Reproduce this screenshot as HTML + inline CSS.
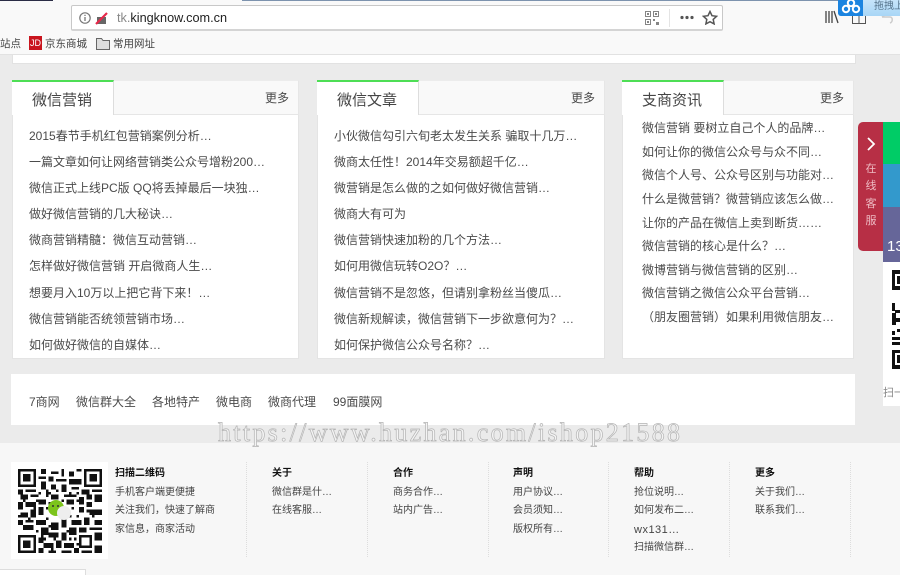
<!DOCTYPE html>
<html lang="zh"><head><meta charset="utf-8"><title>tk.kingknow.com.cn</title>
<style>
*{box-sizing:border-box}
html,body{margin:0;padding:0}
body{width:900px;height:575px;overflow:hidden;position:relative;background:#ebebeb;font:12px/16px "Liberation Sans","WenQuanYi Zen Hei","Noto Sans CJK SC",sans-serif;color:#4a4a4a}
.a,.t,.i,.f{position:absolute;white-space:nowrap}
.a{display:block}
.card{position:absolute;top:80px;height:279px;background:#fff;border:1px solid #e4e4e4;border-top:0}
.hd{position:absolute;left:-1px;right:-1px;top:0;height:35px;background:#f9f9f9;border:1px solid #e6e6e6;border-top:1px solid #ececec}
.tab{position:absolute;left:-1px;top:0;width:102px;height:35px;background:#fff;border-top:2px solid #4ede55;border-right:1px solid #ddd;font-size:15px;line-height:37px;padding-left:20px;color:#444}
.more{position:absolute;top:10px;right:9px;color:#4a4a4a;font-size:12px}
.i{color:#4a4a4a;line-height:16px}
.f{font-size:10px;line-height:14px;color:#444;margin-top:2px}
.f b{color:#111}
.sep{position:absolute;top:462px;height:95px;width:0;border-left:1px dotted #ddd}
.bm{font-size:10.5px;color:#444;line-height:14px;top:37px}
</style></head><body>

<div class="a" style="left:0;top:0;width:900px;height:55px;background:#f9f9f9;border-bottom:1px solid #e2e2e2"></div>
<div class="a" style="left:0;top:0;width:53px;height:1px;background:#2a2c45"></div>
<div class="a" style="left:242px;top:0;width:658px;height:1px;background:#7d93ae"></div>

<div class="a" style="left:71px;top:5px;width:652px;height:26px;background:#fff;border:1px solid #c8c8c8;border-bottom:2px solid #d4d4d4;border-radius:2px"></div>
<svg class="a" style="left:78px;top:11px" width="30" height="14" viewBox="0 0 30 14"><circle cx="7" cy="7" r="5.2" fill="none" stroke="#777" stroke-width="1.2"/><path d="M7 6v4M7 3.8v1.2" stroke="#777" stroke-width="1.3"/><path d="M19 6h9v7h-9z" fill="#666"/><path d="M18 13L29 2" stroke="#e8284a" stroke-width="2.2"/></svg>
<span class="t" style="left:117px;top:10px;font-size:12.700px;color:#222"><span style="color:#888">tk.</span>kingknow.com.cn</span>

<svg class="a" style="left:645px;top:11px" width="14" height="14" viewBox="0 0 14 14" fill="none" stroke="#858585"><path d="M.5.5h5v5h-5zM8.500.5h5v5h-5zM.5 8.500h5v5h-5z"/><path d="M8 8h2v2H8zM11 11h3v3h-3zM2 2h2v2H2zM10 2h2v2h-2zM2 10h2v2H2z" fill="#858585" stroke="none"/></svg>
<div class="a" style="left:669px;top:9px;width:1px;height:18px;background:#e4e4e4"></div>
<svg class="a" style="left:680px;top:15px" width="14" height="5"><circle cx="2" cy="2.500" r="1.600" fill="#555"/><circle cx="7" cy="2.500" r="1.600" fill="#555"/><circle cx="12" cy="2.500" r="1.600" fill="#555"/></svg>
<svg class="a" style="left:702px;top:10px" width="16" height="15" viewBox="0 0 16 15"><path d="M8 1.500l2 4.200 4.600.6-3.400 3.100.9 4.500L8 11.700l-4.100 2.200.9-4.500L1.400 6.300 6 5.700z" fill="none" stroke="#555" stroke-width="1.500"/></svg>

<svg class="a" style="left:825px;top:10px" width="14" height="14" viewBox="0 0 14 14"><path d="M1 1v12M4 1v12M7 1v12M9 1l4 12" stroke="#444" stroke-width="1.300" fill="none"/></svg>
<svg class="a" style="left:852px;top:14px" width="14" height="10" viewBox="0 0 14 10"><path d="M.5 0v9.500h13V0M7 0v9.500" stroke="#555" fill="none"/></svg>
<svg class="a" style="left:880px;top:14px" width="14" height="10" viewBox="0 0 14 10"><path d="M2 3h8c3 0 3 5 0 6M2 3l4-3" stroke="#ccc" stroke-width="1.500" fill="none"/></svg>
<div class="a" style="left:838px;top:0;width:62px;height:16px;background:linear-gradient(#c6e4fa,#a8d6f6);border-radius:0 0 0 3px"></div>
<div class="a" style="left:838px;top:0;width:25px;height:16px;background:#1b84e0;border-radius:0 0 0 3px"></div>
<svg class="a" style="left:841px;top:0" width="20" height="14" viewBox="0 0 20 14"><circle cx="10" cy="3" r="3.200" fill="none" stroke="#fff" stroke-width="2"/><circle cx="5" cy="9" r="3.200" fill="none" stroke="#fff" stroke-width="2"/><circle cx="15" cy="9" r="3.200" fill="none" stroke="#fff" stroke-width="2"/></svg>
<span class="t" style="left:874px;top:0;font-size:10px;line-height:14px;color:#56748c">拖拽上</span>

<span class="t bm" style="left:0">站点</span>
<div class="a" style="left:29px;top:36px;width:13px;height:14px;background:#c9151e;color:#fff;font-size:9px;line-height:14px;text-align:center">JD</div>
<span class="t bm" style="left:45px">京东商城</span>
<svg class="a" style="left:96px;top:37px" width="14" height="13" viewBox="0 0 14 13"><path d="M.5 12.500V1.500h5l1.500 2h6.500v9z" fill="#ddd" stroke="#666"/></svg>
<span class="t bm" style="left:113px">常用网址</span>

<div class="a" style="left:12px;top:55px;width:844px;height:9px;background:#fff;border:1px solid #e2e2e2;border-top:0"></div>

<div class="card" style="left:12px;width:287px">
 <div class="hd"></div><div class="tab">微信营销</div><span class="t more">更多</span>
</div>
<div class="i" style="left:29px;top:128px">2015春节手机红包营销案例分析…</div>
<div class="i" style="left:29px;top:154px">一篇文章如何让网络营销类公众号增粉200…</div>
<div class="i" style="left:29px;top:180px">微信正式上线PC版 QQ将丢掉最后一块独…</div>
<div class="i" style="left:29px;top:206px">做好微信营销的几大秘诀…</div>
<div class="i" style="left:29px;top:232px">微商营销精髓：微信互动营销…</div>
<div class="i" style="left:29px;top:258px">怎样做好微信营销 开启微商人生…</div>
<div class="i" style="left:29px;top:285px">想要月入10万以上把它背下来！…</div>
<div class="i" style="left:29px;top:311px">微信营销能否统领营销市场…</div>
<div class="i" style="left:29px;top:337px">如何做好微信的自媒体…</div>

<div class="card" style="left:317px;width:288px">
 <div class="hd"></div><div class="tab">微信文章</div><span class="t more">更多</span>
</div>
<div class="i" style="left:334px;top:128px">小伙微信勾引六旬老太发生关系 骗取十几万…</div>
<div class="i" style="left:334px;top:154px">微商太任性！2014年交易额超千亿…</div>
<div class="i" style="left:334px;top:180px">微营销是怎么做的之如何做好微信营销…</div>
<div class="i" style="left:334px;top:206px">微商大有可为</div>
<div class="i" style="left:334px;top:232px">微信营销快速加粉的几个方法…</div>
<div class="i" style="left:334px;top:258px">如何用微信玩转O2O？…</div>
<div class="i" style="left:334px;top:285px">微信营销不是忽悠，但请别拿粉丝当傻瓜…</div>
<div class="i" style="left:334px;top:311px">微信新规解读，微信营销下一步欲意何为？…</div>
<div class="i" style="left:334px;top:337px">如何保护微信公众号名称？…</div>

<div class="card" style="left:622px;width:232px">
 <div class="hd"></div><div class="tab">支商资讯</div><span class="t more">更多</span>
</div>
<div class="i" style="left:642px;top:120px">微信营销 要树立自己个人的品牌…</div>
<div class="i" style="left:642px;top:144px">如何让你的微信公众号与众不同…</div>
<div class="i" style="left:642px;top:167px">微信个人号、公众号区别与功能对…</div>
<div class="i" style="left:642px;top:191px">什么是微营销？微营销应该怎么做…</div>
<div class="i" style="left:642px;top:215px">让你的产品在微信上卖到断货……</div>
<div class="i" style="left:642px;top:238px">微信营销的核心是什么？…</div>
<div class="i" style="left:642px;top:262px">微博营销与微信营销的区别…</div>
<div class="i" style="left:642px;top:285px">微信营销之微信公众平台营销…</div>
<div class="i" style="left:642px;top:309px">（朋友圈营销）如果利用微信朋友…</div>

<div class="a" style="left:858px;top:122px;width:26px;height:129px;background:#b72f45;border-radius:5px 0 0 5px"></div>
<svg class="a" style="left:866px;top:137px" width="10" height="14" viewBox="0 0 10 14"><path d="M2 1l6 6-6 6" fill="none" stroke="#fff" stroke-width="1.800"/></svg>
<div class="a" style="left:864px;top:161px;width:14px;font-size:11px;line-height:17.300px;color:#eebcc4;text-align:center">在<br>线<br>客<br>服</div>
<div class="a" style="left:883px;top:122px;width:17px;height:42px;background:#00cc66"></div>
<div class="a" style="left:883px;top:164px;width:17px;height:43px;background:#3399cc"></div>
<div class="a" style="left:883px;top:207px;width:17px;height:55px;background:#666699"></div>
<span class="t" style="left:887px;top:238px;font-size:15px;line-height:18px;color:#fff;width:13px;overflow:hidden">13</span>
<div class="a" style="left:883px;top:262px;width:17px;height:144px;background:#fff"></div>
<svg class="a" style="left:883px;top:262px" width="17" height="114" viewBox="0 0 17 114"><path d="M9 8h8v4H12v12h5v4H9zM9 41h3v8H9zM12 48h5v3h-5zM9 51h4v12H9zM13 56h4v4h-4zM9 69h3v4H9zM14 67h3v3h-3zM9 75h8v3H9zM9 80h8v3H9zM9 88h8v3h-5v12h5v4H9z" fill="#111"/><path d="M14 14h3v8h-3zM14 93h3v8h-3z" fill="#111"/></svg>
<span class="t" style="left:883px;top:385px;width:17px;overflow:hidden;font-size:11px;color:#888">扫一扫</span>

<div class="a" style="left:11px;top:374px;width:844px;height:51px;background:#fff"></div>
<span class="t" style="left:29px;top:394px">7商网</span>
<span class="t" style="left:76px;top:394px">微信群大全</span>
<span class="t" style="left:152px;top:394px">各地特产</span>
<span class="t" style="left:216px;top:394px">微电商</span>
<span class="t" style="left:268px;top:394px">微商代理</span>
<span class="t" style="left:333px;top:394px">99面膜网</span>

<div class="a" style="left:0;top:443px;width:900px;height:132px;background:#f7f7f7"></div>
<div class="a" style="left:0;top:569px;width:86px;height:6px;background:#fff;border:1px solid #ddd;border-left:0;border-bottom:0"></div>

<div class="a" style="left:11px;top:462px;width:97px;height:97px;background:#fff"></div>
<svg class="a" style="left:18px;top:469px" width="84" height="84" viewBox="0 0 33 33" shape-rendering="crispEdges"><path fill="#111" d="M0 0h7v7H0zM1 1v5h5V1zM2 2h3v3H2zM26 0h7v7h-7zM27 1v5h5V1zM28 2h3v3h-3zM0 26h7v7H0zM1 27v5h5v-5zM2 28h3v3H2z" fill-rule="evenodd"/><path fill="#111" d="M9 0h2v2H9zM13 1h3v1h-3zM17 0h1v3h-1zM20 1h2v2h-2zM23 0h2v1h-2zM8 3h3v1H8zM12 3h2v2h-2zM15 4h4v1h-4zM20 4h5v2h-5zM9 5h2v3H9zM13 6h2v2h-2zM17 6h2v3h-2zM21 7h3v1h-3zM0 8h2v2H0zM3 8h4v1H3zM11 8h1v3h-1zM25 8h3v2h-3zM29 8h4v1h-4zM1 10h3v2H1zM5 10h3v1H5zM13 10h3v2h-3zM18 10h5v1h-5zM24 11h2v3h-2zM27 10h2v2h-2zM30 10h3v3h-3zM0 13h2v3H0zM3 13h4v2H3zM8 12h3v2H8zM19 12h3v2h-3zM27 13h2v2h-2zM1 17h3v2H1zM5 16h2v3H5zM8 15h2v3H8zM24 15h2v2h-2zM28 16h5v2h-5zM0 20h2v2H0zM3 20h3v1H3zM7 20h4v2H7zM13 21h3v3h-3zM17 19h2v4h-2zM21 20h4v2h-4zM26 19h2v3h-2zM30 20h3v2h-3zM2 22h4v2H2zM9 23h3v3H9zM20 23h3v3h-3zM24 23h3v2h-3zM28 23h5v1h-5zM8 27h2v2H8zM12 25h4v2h-4zM17 25h2v3h-2zM24 26h5v5h-5zM30 25h3v3h-3zM10 29h4v2h-4zM15 28h2v3h-2zM18 29h4v2h-4zM8 31h2v2H8zM12 32h3v1h-3zM17 32h4v1h-4zM22 31h2v2h-2zM25 32h4v1h-4zM30 30h3v3h-3z"/><path fill="#111" d="M8 9h1v1H8zM12 9h1v1h-1zM15 8h1v1h-1zM20 9h1v1h-1zM23 9h1v1h-1zM2 12h1v1H2zM7 12h1v1H7zM12 13h1v1h-1zM17 12h1v1h-1zM23 12h1v1h-1zM6 15h1v1H6zM11 15h1v1h-1zM21 15h1v1h-1zM27 16h1v1h-1zM0 18h1v1H0zM4 19h1v1H4zM11 19h1v1h-1zM20 18h1v1h-1zM23 18h1v1h-1zM29 18h1v1h-1zM12 22h1v1h-1zM19 24h1v1h-1zM7 24h1v1H7zM10 27h1v1h-1zM14 27h1v1h-1zM20 27h1v1h-1zM22 27h1v1h-1zM9 26h1v1H9zM13 31h1v1h-1zM23 29h1v1h-1z"/><path fill="#fff" d="M25 27h3v3h-3z"/></svg>
<svg class="a" style="left:47px;top:500px" width="26" height="22" viewBox="0 0 26 22"><circle cx="9" cy="8" r="8" fill="#7cc41c"/><circle cx="17" cy="13" r="7" fill="#eee"/><circle cx="6" cy="6" r="1" fill="#333"/><circle cx="11" cy="6" r="1" fill="#333"/></svg>

<div class="f" style="left:115px;top:465px"><b>扫描二维码</b></div>
<div class="f" style="left:115px;top:484px">手机客户端更便捷</div>
<div class="f" style="left:115px;top:502px">关注我们，快速了解商</div>
<div class="f" style="left:115px;top:521px">家信息，商家活动</div>

<div class="sep" style="left:246px"></div><div class="sep" style="left:367px"></div><div class="sep" style="left:488px"></div><div class="sep" style="left:608px"></div><div class="sep" style="left:729px"></div><div class="sep" style="left:850px"></div>

<div class="f" style="left:272px;top:465px"><b>关于</b></div>
<div class="f" style="left:272px;top:484px">微信群是什…</div>
<div class="f" style="left:272px;top:502px">在线客服…</div>
<div class="f" style="left:393px;top:465px"><b>合作</b></div>
<div class="f" style="left:393px;top:484px">商务合作…</div>
<div class="f" style="left:393px;top:502px">站内广告…</div>
<div class="f" style="left:513px;top:465px"><b>声明</b></div>
<div class="f" style="left:513px;top:484px">用户协议…</div>
<div class="f" style="left:513px;top:502px">会员须知…</div>
<div class="f" style="left:513px;top:521px">版权所有…</div>
<div class="f" style="left:634px;top:465px"><b>帮助</b></div>
<div class="f" style="left:634px;top:484px">抢位说明…</div>
<div class="f" style="left:634px;top:502px">如何发布二…</div>
<div class="f" style="left:634px;top:521px;font-size:11px;letter-spacing:.5px">wx131…</div>
<div class="f" style="left:634px;top:539px">扫描微信群…</div>
<div class="f" style="left:755px;top:465px"><b>更多</b></div>
<div class="f" style="left:755px;top:484px">关于我们…</div>
<div class="f" style="left:755px;top:502px">联系我们…</div>

<svg class="a" style="left:210px;top:412px" width="480" height="40"><text x="8" y="29" textLength="462" lengthAdjust="spacing" font-family="Liberation Serif,serif" font-size="26" fill="#f4f4f4" stroke="#b4b4b4" stroke-width=".7">https://www.huzhan.com/ishop21588</text></svg>
</body></html>
